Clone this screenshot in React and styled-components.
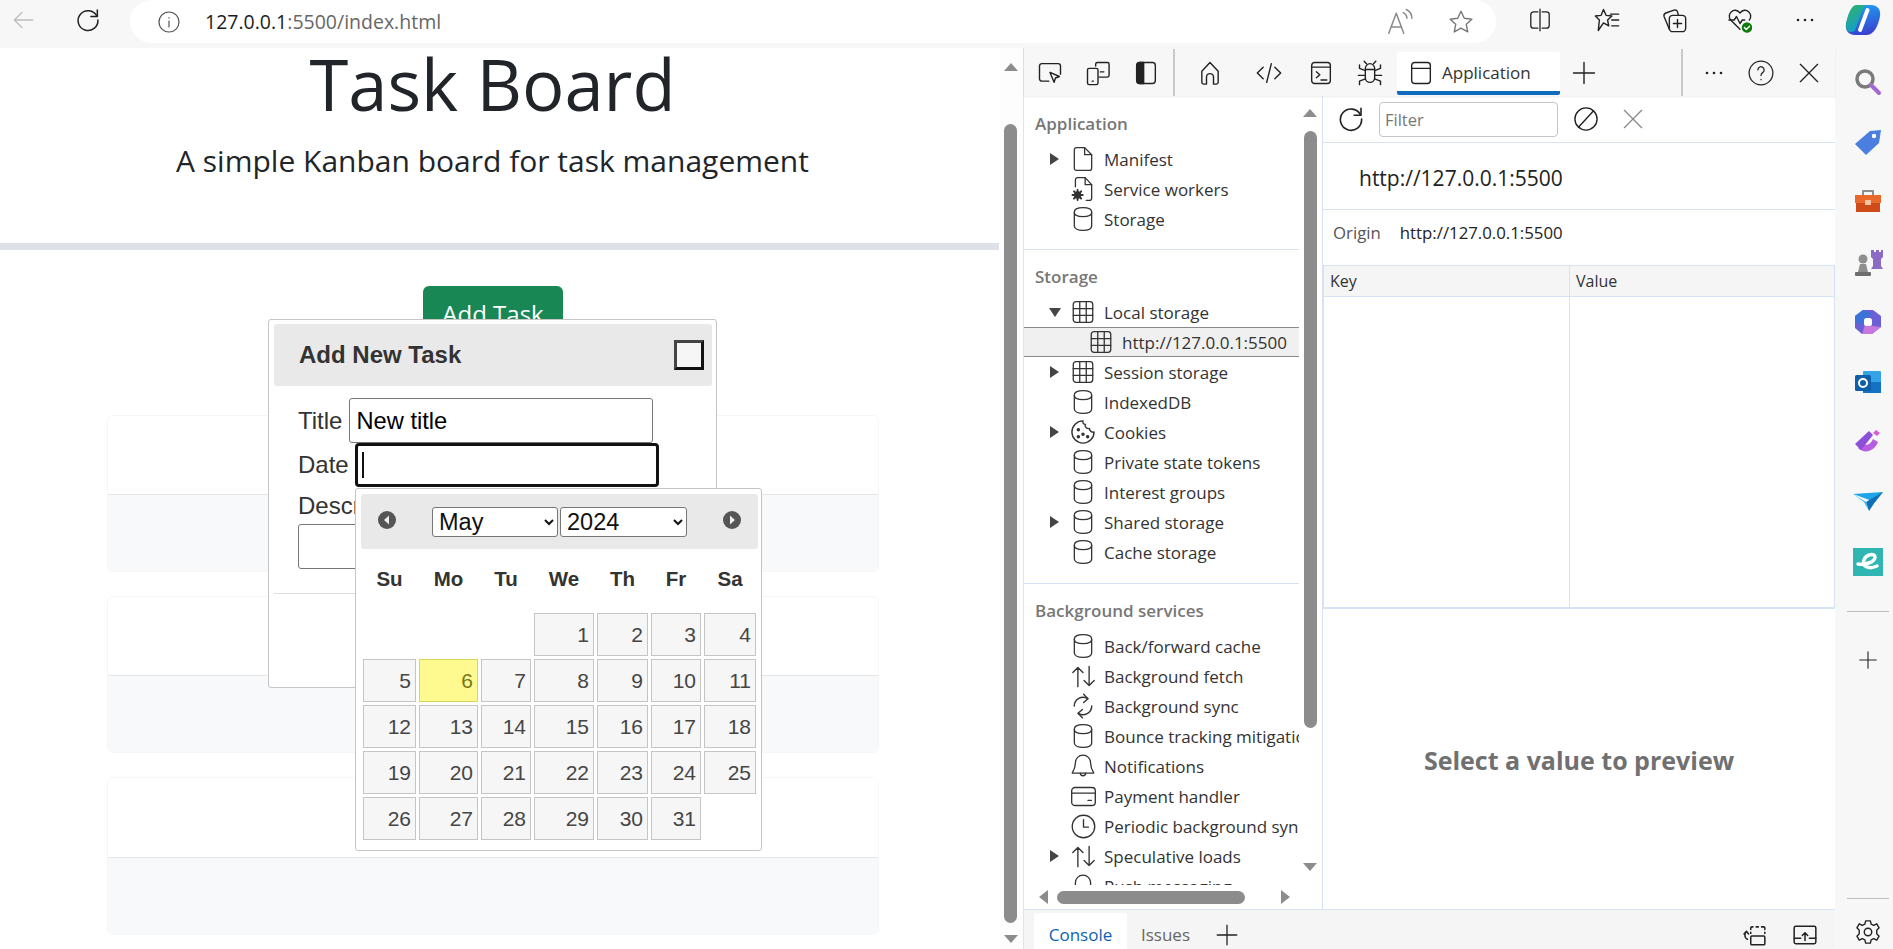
import styled, { createGlobalStyle } from "styled-components";

const GlobalStyle = createGlobalStyle`
  html, body { margin: 0; padding: 0; overflow: hidden; background: #fff; }
  * { box-sizing: border-box; }
`;

const UI_FONT = `"Open Sans", "Noto Sans", sans-serif`;
const ARIAL = `"Liberation Sans", Arial, sans-serif`;
const LINE = "#d6e3f5";

// ---- icons ----
const Svg = styled.svg`
  display: block;
  flex: none;
  fill: none;
  stroke: ${(p) => p.$color || "#333"};
  stroke-width: ${(p) => p.$sw || 1.2};
  stroke-linecap: round;
  stroke-linejoin: round;
`;
const Ico = ({ size = 24, color, sw, children }) => (
  <Svg width={size} height={size} viewBox="0 0 24 24" $color={color} $sw={sw}>
    {children}
  </Svg>
);

const Cylinder = () => (
  <Ico size={26}>
    <path d="M4 5.5C4 3 7.500 1.500 12 1.500S20 3 20 5.500v13c0 2.500-3.500 4-8 4s-8-1.500-8-4z" />
    <path d="M4 6c0 2.500 3.500 3.800 8 3.800S20 8.500 20 6" />
  </Ico>
);
const GridIcon = () => (
  <Ico size={26}>
    <rect x="3" y="2.500" width="18" height="19" rx="2.5" />
    <path d="M3 8.800h18M3 15.200h18M9 2.500v19M15 2.500v19" />
  </Ico>
);
const FileIcon = () => (
  <Ico size={26}>
    <path d="M6 1.500h7.500L20 8v12.500a2 2 0 0 1-2 2H6a2 2 0 0 1-2-2v-17a2 2 0 0 1 2-2z" />
    <path d="M13.500 1.500V8H20" />
  </Ico>
);
const WorkerIcon = () => (
  <Ico size={26}>
    <path d="M5 10V3.500a2 2 0 0 1 2-2h7L20 8v12.500a2 2 0 0 1-2 2h-3" />
    <path d="M14 1.500V8h6" />
    <circle cx="7" cy="17.500" r="2.600" fill="#333" strokeWidth="1.5" />
    <path d="M7 12.800v1.700M7 20.500v1.700M2.300 17.500H4M10 17.500h1.700M3.700 14.200l1.200 1.200M9.100 19.600l1.200 1.200M3.700 20.800l1.200-1.200M9.100 15.400l1.200-1.200" strokeWidth="1.8" />
  </Ico>
);
const CookieIcon = () => (
  <Ico size={28}>
    <path d="M12 2.500a9.500 9.500 0 1 0 9.500 9.500c-2 .5-4-1-4-3-2 .5-4.500-1.500-3.500-3.500-1.500 0-2.500-1.500-2-3z" />
    <circle cx="8" cy="10" r=".9" fill="#333" />
    <circle cx="12" cy="14" r=".9" fill="#333" />
    <circle cx="8" cy="16" r=".9" fill="#333" />
    <circle cx="16" cy="16" r=".9" fill="#333" />
  </Ico>
);
const UpDownIcon = () => (
  <Ico size={27}>
    <path d="M7 21V4M2.500 8.500 7 4l4.500 4.500M17 3v17M12.500 15.500 17 20l4.500-4.500" />
  </Ico>
);
const SyncIcon = () => (
  <Ico size={28}>
    <path d="M4.500 12a7.500 7.500 0 0 1 11.500-6.300M19.500 12A7.500 7.500 0 0 1 8 18.300" />
    <path d="M12.500 2l3.800 3.800-3.800 3.200M11.500 22l-3.800-3.800 3.800-3.200" />
  </Ico>
);
const BellIcon = () => (
  <Ico size={26}>
    <path d="M12 2a7 7 0 0 0-7 7c0 5-2 8-3 9.500h20c-1-1.500-3-4.500-3-9.500a7 7 0 0 0-7-7z" />
    <path d="M9.500 18.500a2.500 2.500 0 0 0 5 0" />
  </Ico>
);
const CardIcon = () => (
  <Ico size={27}>
    <rect x="1.5" y="4" width="21" height="16" rx="3" />
    <path d="M1.500 9h21M16 15.500h3" />
  </Ico>
);
const ClockIcon = () => (
  <Ico size={27}>
    <circle cx="12" cy="12" r="10" />
    <path d="M12 6v6.500h4.500" />
  </Ico>
);
const BackIcon = () => (
  <Ico size={26} color="#bdbdbd">
    <path d="M21 12H4M11 5l-7 7 7 7" />
  </Ico>
);
const ReloadIcon = ({ color = "#222", size = 28 }) => (
  <Ico size={size} color={color} sw={1.3}>
    <path d="M19.500 8.500A8.500 8.500 0 1 0 20.500 12" />
    <path d="M20 3.500v5.500h-5.500" />
  </Ico>
);
const InfoIcon = () => (
  <Ico size={24} color="#555">
    <circle cx="12" cy="12" r="10" />
    <path d="M12 11v6M12 7.500v.4" />
  </Ico>
);
const ReadAloudIcon = () => (
  <Ico size={30} color="#8a8a8a">
    <path d="M3 21 9 5l6 16M5 16h8" />
    <path d="M14.500 4.500c2 1 3 2.500 3 4.500M17 2c3 1.500 4.500 3.500 4.500 7" />
  </Ico>
);
const StarPath = "M12 2.800l2.800 6 6.500.8-4.800 4.400 1.300 6.500L12 17.200l-5.800 3.300 1.300-6.500L2.700 9.600l6.500-.8z";
const StarIcon = () => (
  <Ico size={28} color="#777">
    <path d={StarPath} />
  </Ico>
);
const SplitIcon = () => (
  <Ico size={26} color="#222">
    <path d="M10 4.500H6A2.500 2.500 0 0 0 3.500 7v10A2.500 2.500 0 0 0 6 19.500h4M14 4.500h4A2.500 2.500 0 0 1 20.500 7v10a2.500 2.500 0 0 1-2.500 2.500h-4M12 2v20" />
  </Ico>
);
const FavIcon = () => (
  <Ico size={28} color="#222">
    <path d="M9 3l2.200 5 5 .6-3.700 3.400 1 5L9 14.500 4.500 21 5.500 12 2 8.600l5-.6z" />
    <path d="M15 7h7M16 12h6M16 17h6" />
  </Ico>
);
const CollectionsIcon = () => (
  <Ico size={28} color="#222">
    <rect x="8" y="8" width="14" height="14" rx="3" />
    <path d="M15 11.500v7M11.500 15h7M8 20 3.500 9a2.500 2.500 0 0 1 1.500-3l7-2.500a2.500 2.500 0 0 1 3 1.500l.8 3" />
  </Ico>
);
const HealthIcon = () => (
  <Ico size={28} color="#222">
    <path d="M12 20 4 12c-4-5 3-12 8-6 5-6 12 1 8 6" />
    <path d="M2.500 12H7l2-3 3 6 2-3h2" />
    <circle cx="18" cy="18.5" r="5" fill="#107c10" stroke="#fff" strokeWidth="1" />
    <path d="M15.800 18.500l1.600 1.600 2.800-2.800" stroke="#fff" />
  </Ico>
);
const DotsIcon = ({ color = "#222" }) => (
  <Ico size={24} color={color}>
    <circle cx="5" cy="12" r="1.3" fill={color} stroke="none" />
    <circle cx="12" cy="12" r="1.3" fill={color} stroke="none" />
    <circle cx="19" cy="12" r="1.3" fill={color} stroke="none" />
  </Ico>
);
const InspectIcon = () => (
  <Ico size={28} color="#222">
    <path d="M11 19H5a2 2 0 0 1-2-2V6a2 2 0 0 1 2-2h14a2 2 0 0 1 2 2v7" />
    <path d="M12 11.500l8 3.500-3.300 1.300L15.500 20z" />
  </Ico>
);
const DeviceIcon = () => (
  <Ico size={28} color="#222">
    <path d="M10 6V4.500A1.500 1.500 0 0 1 11.500 3H20a1.500 1.500 0 0 1 1.500 1.500V14a1.500 1.500 0 0 1-1.500 1.500h-7" />
    <path d="M14 11h3" />
    <rect x="3" y="8" width="9" height="14" rx="1.5" />
    <path d="M7 19h1" />
  </Ico>
);
const PanelIcon = () => (
  <Ico size={28} color="#222">
    <rect x="4" y="3" width="16" height="18" rx="2.5" />
    <path d="M4 5.500A2.500 2.500 0 0 1 6.500 3H10v18H6.500A2.500 2.500 0 0 1 4 18.500z" fill="#222" />
  </Ico>
);
const HomeIcon = () => (
  <Ico size={28} color="#222">
    <path d="M5 10.500 12 3l7 7.500V20a1.500 1.500 0 0 1-1.500 1.500H15v-6a3 3 0 0 0-6 0v6H6.500A1.500 1.500 0 0 1 5 20z" />
  </Ico>
);
const CodeIcon = () => (
  <Ico size={28} color="#222">
    <path d="M7 7l-5 5 5 5M17 7l5 5-5 5M14 4l-4 16" />
  </Ico>
);
const ConsoleIcon = () => (
  <Ico size={28} color="#222">
    <rect x="4" y="3" width="16" height="18" rx="2.5" />
    <path d="M4 7h16M8 11l3 2.500-3 2.500M12 18h5" />
  </Ico>
);
const BugIcon = () => (
  <Ico size={28} color="#222">
    <path d="M8 8c0-2 2-4 4-4s4 2 4 4v8a4 4 0 0 1-8 0z M8 9h8" />
    <path d="M9 4 7 2M15 4l2-2M8 10 3 8V5M16 10l5-2V5M8 14H2M16 14h6M8 17l-5 2v3M16 17l5 2v3" />
  </Ico>
);
const WindowIcon = () => (
  <Ico size={28} color="#222">
    <rect x="4" y="3" width="16" height="18" rx="2.5" />
    <path d="M4 8h16" />
  </Ico>
);
const PlusIcon = ({ size = 28, color = "#222" }) => (
  <Ico size={size} color={color}>
    <path d="M12 3v18M3 12h18" />
  </Ico>
);
const HelpIcon = () => (
  <Ico size={30} color="#222" sw={1}>
    <circle cx="12" cy="12" r="9.5" />
    <path d="M9.500 9.500a2.500 2.500 0 1 1 4 2c-1 .7-1.500 1.300-1.500 2.500M12 17v.3" />
  </Ico>
);
const CloseIcon = ({ color = "#222", size = 26 }) => (
  <Ico size={size} color={color}>
    <path d="M4 4l16 16M20 4 4 20" />
  </Ico>
);
const BlockIcon = () => (
  <Ico size={28} color="#222">
    <circle cx="12" cy="12" r="9.5" />
    <path d="M5.500 19 18.500 5" />
  </Ico>
);
const DockIcon = () => (
  <Ico size={26} color="#222" sw={1.4}>
    <rect x="9" y="13" width="13" height="8" rx="1" />
    <path d="M9 7V5.500A1 1 0 0 1 10 4.500h1M14 4.500h2M19 4.500h2a1 1 0 0 1 1 1V7M22 9.500v1M9 9.500v1" />
    <path d="M5 9c-2 1-2 6 1 7M2.800 11 5 8.500 7 11" />
  </Ico>
);
const PopupIcon = () => (
  <Ico size={26} color="#222" sw={1.4}>
    <rect x="2" y="4" width="20" height="16" rx="1.5" />
    <path d="M2 15h6M16 15h6M12 17v-7M9.500 12.500 12 10l2.500 2.500" />
  </Ico>
);
const GearIcon = () => (
  <Ico size={28} color="#222">
    <circle cx="12" cy="12" r="3.2" />
    <path d="M10 2.500h4l.7 2.800 2.200 1 2.600-1.300 2 3.400-2 2v3.200l2 2-2 3.400-2.600-1.300-2.200 1-.7 2.800h-4l-.7-2.800-2.200-1-2.600 1.300-2-3.400 2-2v-3.200l-2-2 2-3.400 2.600 1.300 2.200-1z" />
  </Ico>
);
const PickerNav = ({ dir }) => (
  <Svg width="20" height="20" viewBox="0 0 20 20" $sw={0}>
    <circle cx="10" cy="10" r="9" fill="#555" stroke="none" />
    <path d={dir === "prev" ? "M12 5.500v9L7 10z" : "M8 5.500v9l5-4.500z"} fill="#eee" stroke="none" />
  </Svg>
);

// side rail logos
const CopilotLogo = () => (
  <Svg width="36" height="32" viewBox="0 0 36 32" $sw={0}>
    <defs>
      <linearGradient id="copilotLeft" x1="0" y1="0" x2="0.6" y2="1">
        <stop offset="0" stopColor="#33b65c" />
        <stop offset="1" stopColor="#0f9bd7" />
      </linearGradient>
      <linearGradient id="copilotRight" x1="0.4" y1="0" x2="0.6" y2="1">
        <stop offset="0" stopColor="#1f9cf0" />
        <stop offset="1" stopColor="#3a3fd0" />
      </linearGradient>
    </defs>
    <path d="M12 1h14c6 0 10 4 9 11-1.500 9-6 19-13 19H10C4 31 0 27 1 20 3 11 6 1 12 1z" fill="url(#copilotRight)" stroke="none" />
    <path d="M12 1h10c-3 1-4 3-5 6l-6 17c-1 3-3 4-5 4C1.500 28 .3 24 1 20 3 11 6 1 12 1z" fill="url(#copilotLeft)" stroke="none" />
    <path d="M22.500 6 15 26" stroke="#fff" strokeWidth="4" />
  </Svg>
);
const SearchLogo = () => (
  <Svg width="30" height="30" viewBox="0 0 30 30" $sw={0}>
    <circle cx="12" cy="12" r="8" stroke="#7a7a7a" strokeWidth="3.5" fill="none" />
    <path d="M18 18l8 8" stroke="#a26ad0" strokeWidth="4" />
  </Svg>
);
const TagLogo = () => (
  <Svg width="30" height="30" viewBox="0 0 30 30" $sw={0}>
    <path d="M2 17 17 4l11-1-2 13-13 12z" fill="#4a7fe0" stroke="none" />
    <circle cx="21" cy="9" r="2.2" fill="#fff" stroke="none" />
  </Svg>
);
const ToolboxLogo = () => (
  <Svg width="30" height="30" viewBox="0 0 30 30" $sw={0}>
    <path d="M10 8V4h10v4" stroke="#8d8d8d" strokeWidth="2" fill="none" />
    <rect x="2" y="8" width="26" height="8" fill="#ea6a2c" stroke="none" />
    <rect x="3" y="16" width="24" height="9" fill="#cf4a19" stroke="none" />
    <rect x="12" y="13" width="6" height="5" fill="#f3c2a5" stroke="none" />
  </Svg>
);
const ChessLogo = () => (
  <Svg width="32" height="32" viewBox="0 0 32 32" $sw={0}>
    <path d="M19 4h3v2h2V4h3v2h2V4h2v7l-2 2v7l2 3H19l2-3v-7l-2-2z" fill="#8a6cc4" stroke="none" />
    <circle cx="11" cy="13" r="4.5" fill="#8f8f8f" stroke="none" />
    <path d="M8 18h6l2 8H6z" fill="#8f8f8f" stroke="none" />
    <rect x="3" y="26" width="16" height="4" rx="1" fill="#6e6e6e" stroke="none" />
  </Svg>
);
const M365Logo = () => (
  <Svg width="30" height="30" viewBox="0 0 30 30" $sw={0}>
    <path d="M10 3h10l8 6v11l-9 7H9l-7-6V9z" fill="#6c5fd5" stroke="none" />
    <path d="M2 9l8-6 10 4-8 5v6l-10-3z" fill="#3b73d9" stroke="none" />
    <path d="M12 18l16 2-9 7H9z" fill="#c678de" stroke="none" />
    <rect x="11" y="11" width="8" height="8" rx="2.5" fill="#fff" stroke="none" />
  </Svg>
);
const OutlookLogo = () => (
  <Svg width="30" height="30" viewBox="0 0 30 30" $sw={0}>
    <rect x="10" y="4" width="18" height="22" rx="1" fill="#35a3e8" stroke="none" />
    <path d="M10 15h18v11H10z" fill="#1273c4" stroke="none" />
    <rect x="2" y="8" width="16" height="16" rx="1.5" fill="#0f5fa8" stroke="none" />
    <circle cx="10" cy="16" r="4" fill="none" stroke="#fff" strokeWidth="2" />
  </Svg>
);
const PaintLogo = () => (
  <Svg width="32" height="32" viewBox="0 0 32 32" $sw={0}>
    <path d="M6 22c6 6 16 4 20-6l-5-3c-2 5-6 7-10 5z" fill="#b85ce0" stroke="none" />
    <path d="M3 18 17 5l4 4L9 24z" fill="#8b4fd8" stroke="none" />
    <path d="M24 4l4 3-3 3-4-3z" fill="#d65cd8" stroke="none" />
  </Svg>
);
const SendLogo = () => (
  <Svg width="32" height="32" viewBox="0 0 32 32" $sw={0}>
    <path d="M1 8l30-2-8 10z" fill="#1ca6e8" stroke="none" />
    <path d="M31 6 14 16l3 9 6-9z" fill="#0f6fb8" stroke="none" />
    <path d="M1 8l13 8 3 9-5-9z" fill="#27c0ee" stroke="none" />
  </Svg>
);
const ELogo = () => (
  <Svg width="30" height="30" viewBox="0 0 30 30" $sw={0}>
    <rect x="0" y="1" width="30" height="28" fill="#2fb5b2" stroke="none" />
    <path d="M5 17c8 1 17-2 17-7 0-4-9-3-11 3s4 10 13 6" fill="none" stroke="#fff" strokeWidth="3.5" />
  </Svg>
);

// ---- browser chrome ----
const Shell = styled.div`
  width: 1893px;
  height: 949px;
  display: flex;
  flex-direction: column;
  overflow: hidden;
  background: #f7f7f7;
  font-family: ${UI_FONT};
  color: #333;
`;
const TopBar = styled.header`
  height: 48px;
  flex: none;
  display: flex;
  align-items: flex-start;
`;
const TopSlot = styled.div`
  width: ${(p) => p.$w}px;
  height: 40px;
  flex: none;
  display: flex;
  align-items: center;
  justify-content: center;
`;
const AddressPill = styled.div`
  width: 1366px;
  height: 43px;
  flex: none;
  background: #fff;
  border-radius: 22px;
  display: flex;
  align-items: center;
  padding-left: 27px;
`;
const UrlText = styled.div`
  margin-left: 24px;
  font-size: 19.5px;
  color: #666;
  flex: 1;
  b {
    font-weight: 400;
    color: #1c1c1c;
  }
`;
const PillEnd = styled.div`
  width: ${(p) => p.$w}px;
  flex: none;
  display: flex;
  justify-content: center;
`;
const Main = styled.div`
  flex: 1;
  display: flex;
  min-height: 0;
`;

// ---- the page ----
const Viewport = styled.div`
  width: 1023px;
  flex: none;
  display: flex;
  background: #fff;
`;
const Page = styled.main`
  width: 1000px;
  flex: none;
  position: relative;
  font-family: ${UI_FONT};
`;
const Hero = styled.section`
  height: 202px;
  padding-right: 14px;
  border-bottom: 7px solid #dfe1e8;
  margin-right: 1px;
  text-align: center;
`;
const HeroTitle = styled.h1`
  margin: 0;
  font-size: 70.5px;
  line-height: 72px;
  font-weight: 400;
  color: #212529;
`;
const HeroLead = styled.p`
  margin: 21px 0 0;
  font-size: 30px;
  line-height: 40px;
  font-weight: 400;
  color: #212529;
`;
const Board = styled.section`
  width: 986px;
  display: flex;
  flex-direction: column;
  align-items: center;
  padding-top: 36px;
`;
const AddButton = styled.button`
  width: 140px;
  height: 54px;
  border: 0;
  border-radius: 6px;
  background: #198754;
  color: #fff;
  font-family: ${UI_FONT};
  font-size: 24px;
`;
const Cards = styled.div`
  width: 772px;
  margin-top: 75px;
  display: flex;
  flex-direction: column;
  gap: 24px;
`;
const Card = styled.article`
  border-radius: 6px;
  overflow: hidden;
  border: 1px solid #f6f6f6;
`;
const CardTop = styled.div`
  height: ${(p) => p.$h}px;
  background: #fff;
  border-bottom: 1px solid #e6e6e6;
`;
const CardFoot = styled.div`
  height: 76px;
  background: #f8f9fa;
`;

// ---- jQuery UI dialog ----
const Dialog = styled.div`
  position: absolute;
  left: 268px;
  top: 271px;
  width: 449px;
  height: 369px;
  background: #fff;
  border: 1px solid #c5c5c5;
  border-radius: 3px;
  padding: 4px 4px 4px 5px;
  font-family: ${ARIAL};
  color: #333;
`;
const DialogBar = styled.div`
  height: 62px;
  background: #e9e9e9;
  border-radius: 3px;
  display: flex;
  align-items: center;
  justify-content: space-between;
  padding: 0 8px 0 25px;
`;
const DialogTitle = styled.span`
  font-size: 24px;
  font-weight: 700;
`;
const DialogClose = styled.div`
  width: 30px;
  height: 30px;
  background: #f6f6f6;
  border: 3px solid #111;
  border-left-color: #444;
  border-top-color: #444;
`;
const DialogBody = styled.div`
  padding: 12px 0 0 24px;
`;
const FormRow = styled.div`
  display: flex;
  align-items: center;
  gap: ${(p) => p.$gap}px;
  height: ${(p) => p.$h}px;
`;
const Label = styled.label`
  font-size: 24px;
`;
const TextInput = styled.input`
  width: 304px;
  height: 45px;
  flex: none;
  padding: 2px 6px 0;
  border: 1px solid #767676;
  border-radius: 3px;
  font-family: ${ARIAL};
  font-size: 23.7px;
  color: #000;
  background: #fff;
`;
const DateField = styled.div`
  width: 304px;
  height: 44px;
  flex: none;
  padding-left: 4px;
  border: 3px solid #111;
  border-radius: 4px;
  display: flex;
  align-items: center;
  background: #fff;
`;
const Caret = styled.span`
  width: 2px;
  height: 26px;
  background: #111;
`;
const DescLabel = styled.div`
  height: 37px;
  display: flex;
  align-items: center;
  font-size: 24px;
`;
const DescInput = styled.textarea`
  display: block;
  width: 304px;
  height: 45px;
  resize: none;
  border: 1px solid #767676;
  border-radius: 3px;
  background: #fff;
`;
const DialogRule = styled.hr`
  margin: 24px 0 0 -24px;
  border: 0;
  border-top: 1px solid #dcdcdc;
`;

// ---- datepicker ----
const Picker = styled.div`
  position: absolute;
  left: 355px;
  top: 440px;
  width: 407px;
  height: 363px;
  background: #fff;
  border: 1px solid #c5c5c5;
  border-radius: 3px;
  padding: 5px 3px 5px 5px;
  font-family: ${ARIAL};
`;
const PickerHead = styled.div`
  height: 55px;
  background: #e9e9e9;
  border-radius: 3px;
  display: flex;
  align-items: center;
  padding: 0 0 4px 16px;
`;
const PickerSelects = styled.div`
  display: flex;
  gap: 2px;
  margin: 5px 35px 0 35px;
`;
const PickerSelect = styled.select`
  width: ${(p) => p.$w}px;
  height: 30px;
  border: 1px solid #767676;
  border-radius: 3px;
  background-color: #fff;
  font-family: ${ARIAL};
  font-size: 23.5px;
  color: #111;
  padding: 0 0 0 2px;
`;
const DAY_COLS = "53px 59px 50px 60px 51px 50px 52px";
const WeekHead = styled.div`
  height: 60px;
  margin-left: 2px;
  display: grid;
  grid-template-columns: ${DAY_COLS};
  column-gap: 3px;
  align-items: center;
  text-align: center;
  font-size: 20.5px;
  font-weight: 700;
  color: #333;
`;
const DayGrid = styled.div`
  margin: 4px 0 0 2px;
  display: grid;
  grid-template-columns: ${DAY_COLS};
  grid-auto-rows: 43px;
  gap: 3px;
`;
const Day = styled.div`
  grid-column-start: ${(p) => p.$start || "auto"};
  border: 1px solid ${(p) => (p.$today ? "#dad55e" : "#c5c5c5")};
  background: ${(p) => (p.$today ? "#fffa90" : "#f6f6f6")};
  color: ${(p) => (p.$today ? "#777620" : "#454545")};
  font-size: 21px;
  text-align: right;
  line-height: 41px;
  padding-right: 4px;
`;

// ---- page scrollbar ----
const PageGutter = styled.div`
  width: 23px;
  flex: none;
  display: flex;
  flex-direction: column;
  align-items: center;
  padding: 15px 2px 4px 0;
  background: #fdfdfd;
`;
const Arrow = styled.span`
  width: 0;
  height: 0;
  flex: none;
  border-left: ${(p) => (p.$dir === "right" ? "9px solid #8c8c8c" : p.$dir === "left" ? "0" : "7px solid transparent")};
  border-right: ${(p) => (p.$dir === "left" ? "9px solid #8c8c8c" : p.$dir === "right" ? "0" : "7px solid transparent")};
  border-top: ${(p) =>
    p.$dir === "down" ? "8px solid #8c8c8c" : p.$dir === "up" ? "0" : "7px solid transparent"};
  border-bottom: ${(p) =>
    p.$dir === "up" ? "8px solid #8c8c8c" : p.$dir === "down" ? "0" : "7px solid transparent"};
`;
const VThumb = styled.div`
  width: 13px;
  height: ${(p) => p.$h}px;
  flex: none;
  margin: ${(p) => p.$mt}px 0 ${(p) => p.$mb}px;
  background: #8c8c8c;
  border-radius: 7px;
`;

// ---- devtools ----
const DevTools = styled.aside`
  width: 812px;
  flex: none;
  display: flex;
  flex-direction: column;
  background: #fff;
  border-left: 1px solid #e3e3e3;
`;
const TabBar = styled.div`
  height: 48px;
  flex: none;
  display: flex;
  background: #f7f7f7;
  padding: 2px 0 0 2px;
  box-shadow: 0 1px 2px rgba(0, 0, 0, 0.08);
  position: relative;
`;
const ToolSlot = styled.div`
  width: ${(p) => p.$w}px;
  flex: none;
  display: flex;
  align-items: center;
  justify-content: center;
`;
const ToolRule = styled.div`
  width: 2px;
  height: 47px;
  flex: none;
  margin: -1px ${(p) => p.$mr}px 0 ${(p) => p.$ml}px;
  background: #c9c9c9;
`;
const ActiveTab = styled.div`
  width: 163px;
  height: 43px;
  flex: none;
  margin-top: 2px;
  padding: 2px 0 0 10px;
  display: flex;
  align-items: center;
  gap: 7px;
  background: #fff;
  border-bottom: 4px solid #0f6cbd;
  border-radius: 2px;
  font-size: 17px;
  color: #333;
`;
const Split = styled.div`
  flex: 1;
  min-height: 0;
  display: flex;
`;
const Sidebar = styled.nav`
  width: 299px;
  flex: none;
  display: flex;
  flex-direction: column;
  border-right: 1px solid ${LINE};
`;
const SideMain = styled.div`
  flex: 1;
  min-height: 0;
  display: flex;
`;
const Tree = styled.div`
  width: 275px;
  flex: none;
  overflow: hidden;
  padding-top: 12px;
`;
const TreeHeading = styled.div`
  height: 30px;
  display: flex;
  align-items: center;
  padding-left: 11px;
  margin-bottom: 6px;
  font-size: 17px;
  font-weight: 600;
  color: #777;
`;
const TreeRow = styled.div`
  height: 30px;
  display: flex;
  align-items: center;
  white-space: nowrap;
  padding-left: ${(p) => 26 + (p.$indent || 0)}px;
  font-size: 17px;
  color: #333;
  ${(p) => p.$selected && "background: #f0f0f0; border-top: 1px solid #8a8a8a; border-bottom: 1px solid #8a8a8a;"}
`;
const TreeCaret = styled.div`
  width: 12px;
  flex: none;
  display: flex;
  justify-content: flex-start;
`;
const CaretRight = styled.span`
  border-left: 9px solid #444;
  border-top: 6px solid transparent;
  border-bottom: 6px solid transparent;
`;
const CaretDown = styled.span`
  margin-left: -1px;
  border-top: 9px solid #444;
  border-left: 6px solid transparent;
  border-right: 6px solid transparent;
`;
const TreeIcon = styled.div`
  width: 42px;
  flex: none;
  display: flex;
  justify-content: center;
`;
const TreeRule = styled.div`
  height: 1px;
  margin: ${(p) => p.$mt}px 0 11px;
  background: ${LINE};
`;
const SideGutter = styled.div`
  width: 24px;
  flex: none;
  display: flex;
  flex-direction: column;
  align-items: center;
  padding: 13px 2px 0 0;
`;
const HBar = styled.div`
  height: 24px;
  flex: none;
  display: flex;
  align-items: center;
  padding: 0 10px 0 15px;
  gap: 9px;
`;
const HThumb = styled.div`
  width: 188px;
  height: 13px;
  margin-right: 27px;
  background: #8c8c8c;
  border-radius: 7px;
`;
const Detail = styled.section`
  flex: 1;
  min-width: 0;
  display: flex;
  flex-direction: column;
`;
const DetailBar = styled.div`
  height: 47px;
  flex: none;
  display: flex;
  align-items: center;
  border-bottom: 1px solid ${LINE};
  padding-left: 13px;
`;
const Filter = styled.div`
  width: 179px;
  height: 35px;
  margin: 0 0 0 13px;
  padding-left: 5px;
  border: 1px solid #c4c4c4;
  border-radius: 4px;
  display: flex;
  align-items: center;
  font-size: 16.5px;
  color: #777;
`;
const OriginTitle = styled.div`
  height: 67px;
  flex: none;
  display: flex;
  align-items: center;
  padding: 4px 0 0 36px;
  border-bottom: 1px solid ${LINE};
  font-size: 21px;
  color: #222;
`;
const OriginRow = styled.div`
  height: 55px;
  flex: none;
  display: flex;
  align-items: center;
  gap: 19px;
  padding: 0 0 10px 10px;
  font-size: 16.8px;
  color: #222;
  span {
    color: #555;
  }
`;
const KvTable = styled.div`
  height: 344px;
  flex: none;
  display: flex;
  flex-direction: column;
  border: 1px solid ${LINE};
  border-bottom-width: 2px;
`;
const KvHead = styled.div`
  height: 31px;
  flex: none;
  display: grid;
  grid-template-columns: 245px 1fr;
  background: #f5f5f5;
  border-bottom: 1px solid ${LINE};
  font-size: 16px;
  color: #333;
  > div {
    display: flex;
    align-items: center;
    padding-left: 6px;
  }
  > div + div {
    border-left: 1px solid ${LINE};
  }
`;
const KvBody = styled.div`
  flex: 1;
  display: grid;
  grid-template-columns: 245px 1fr;
  > div + div {
    border-left: 1px solid ${LINE};
  }
`;
const Preview = styled.div`
  flex: 1;
  display: flex;
  align-items: center;
  justify-content: center;
  padding-top: 2px;
  font-size: 25px;
  font-weight: 700;
  color: #707070;
`;
const Drawer = styled.div`
  height: 40px;
  flex: none;
  display: flex;
  background: #f5f5f5;
  border-top: 1px solid ${LINE};
  padding: 3px 0 0 10px;
  font-size: 17px;
`;
const DrawerTab = styled.div`
  width: ${(p) => p.$w}px;
  flex: none;
  display: flex;
  align-items: center;
  justify-content: center;
  padding-top: 7px;
  background: ${(p) => (p.$active ? "#fff" : "transparent")};
  color: ${(p) => (p.$active ? "#0f5fb0" : "#666")};
  border-radius: 3px 3px 0 0;
`;
const DrawerAdd = styled.div`
  width: 46px;
  flex: none;
  display: flex;
  align-items: center;
  justify-content: center;
  padding-top: 7px;
`;
const DrawerRight = styled.div`
  margin-left: auto;
  display: flex;
  align-items: center;
  gap: 25px;
  padding: 7px 17px 0 0;
`;

// ---- side rail ----
const Rail = styled.aside`
  width: 58px;
  flex: none;
  display: flex;
  flex-direction: column;
  align-items: center;
  background: #f7f7f7;
  padding: 4px 0 0 8px;
`;
const RailItem = styled.div`
  height: 60px;
  width: 100%;
  flex: none;
  display: flex;
  align-items: center;
  justify-content: center;
  margin-top: ${(p) => p.$mt || 0}px;
`;
const RailRule = styled.div`
  width: 42px;
  height: 1px;
  flex: none;
  margin-top: ${(p) => p.$mt || 0}px;
  background: #bdbdbd;
`;

const SECTIONS = [
  {
    title: "Application",
    rows: [
      { label: "Manifest", icon: <FileIcon />, caret: "right" },
      { label: "Service workers", icon: <WorkerIcon /> },
      { label: "Storage", icon: <Cylinder /> },
    ],
  },
  {
    title: "Storage",
    ruleTop: 15,
    rows: [
      { label: "Local storage", icon: <GridIcon />, caret: "down" },
      { label: "http://127.0.0.1:5500", icon: <GridIcon />, indent: 18, selected: true },
      { label: "Session storage", icon: <GridIcon />, caret: "right" },
      { label: "IndexedDB", icon: <Cylinder /> },
      { label: "Cookies", icon: <CookieIcon />, caret: "right" },
      { label: "Private state tokens", icon: <Cylinder /> },
      { label: "Interest groups", icon: <Cylinder /> },
      { label: "Shared storage", icon: <Cylinder />, caret: "right" },
      { label: "Cache storage", icon: <Cylinder /> },
    ],
  },
  {
    title: "Background services",
    ruleTop: 16,
    rows: [
      { label: "Back/forward cache", icon: <Cylinder /> },
      { label: "Background fetch", icon: <UpDownIcon /> },
      { label: "Background sync", icon: <SyncIcon /> },
      { label: "Bounce tracking mitigations", icon: <Cylinder /> },
      { label: "Notifications", icon: <BellIcon /> },
      { label: "Payment handler", icon: <CardIcon /> },
      { label: "Periodic background sync", icon: <ClockIcon /> },
      { label: "Speculative loads", icon: <UpDownIcon />, caret: "right" },
      { label: "Push messaging", icon: <BellIcon /> },
    ],
  },
];

const WEEK = ["Su", "Mo", "Tu", "We", "Th", "Fr", "Sa"];
const DAYS = Array.from({ length: 31 }, (_, i) => i + 1);
const MONTHS = ["Jan", "Feb", "Mar", "Apr", "May", "Jun", "Jul", "Aug", "Sep", "Oct", "Nov", "Dec"];
const RAIL = [SearchLogo, TagLogo, ToolboxLogo, ChessLogo, M365Logo, OutlookLogo, PaintLogo, SendLogo, ELogo];
const CARD_TOPS = [79, 79, 80];

const App = () => (
  <>
    <GlobalStyle />
    <Shell>
      <TopBar>
        <TopSlot $w={46}>
          <BackIcon />
        </TopSlot>
        <TopSlot $w={84}>
          <ReloadIcon />
        </TopSlot>
        <AddressPill>
          <InfoIcon />
          <UrlText>
            <b>127.0.0.1</b>:5500/index.html
          </UrlText>
          <PillEnd $w={62}>
            <ReadAloudIcon />
          </PillEnd>
          <PillEnd $w={60}>
            <StarIcon />
          </PillEnd>
          <PillEnd $w={5} />
        </AddressPill>
        <TopSlot $w={88}>
          <SplitIcon />
        </TopSlot>
        <TopSlot $w={46}>
          <FavIcon />
        </TopSlot>
        <TopSlot $w={88}>
          <CollectionsIcon />
        </TopSlot>
        <TopSlot $w={44}>
          <HealthIcon />
        </TopSlot>
        <TopSlot $w={86}>
          <DotsIcon />
        </TopSlot>
        <TopSlot $w={30}>
          <CopilotLogo />
        </TopSlot>
      </TopBar>
      <Main>
        <Viewport>
          <Page>
            <Hero>
              <HeroTitle>Task Board</HeroTitle>
              <HeroLead>A simple Kanban board for task management</HeroLead>
            </Hero>
            <Board>
              <AddButton>Add Task</AddButton>
              <Cards>
                {CARD_TOPS.map((h, n) => (
                  <Card key={n}>
                    <CardTop $h={h} />
                    <CardFoot />
                  </Card>
                ))}
              </Cards>
            </Board>
            <Dialog>
              <DialogBar>
                <DialogTitle>Add New Task</DialogTitle>
                <DialogClose />
              </DialogBar>
              <DialogBody>
                <FormRow $gap={7} $h={45}>
                  <Label>Title</Label>
                  <TextInput defaultValue="New title" />
                </FormRow>
                <FormRow $gap={6} $h={44}>
                  <Label>Date</Label>
                  <DateField>
                    <Caret />
                  </DateField>
                </FormRow>
                <DescLabel>Description</DescLabel>
                <DescInput />
                <DialogRule />
              </DialogBody>
            </Dialog>
            <Picker>
              <PickerHead>
                <PickerNav dir="prev" />
                <PickerSelects>
                  <PickerSelect $w={126} defaultValue="May">
                    {MONTHS.map((m) => (
                      <option key={m}>{m}</option>
                    ))}
                  </PickerSelect>
                  <PickerSelect $w={127} defaultValue="2024">
                    <option>2023</option>
                    <option>2024</option>
                    <option>2025</option>
                  </PickerSelect>
                </PickerSelects>
                <PickerNav dir="next" />
              </PickerHead>
              <WeekHead>
                {WEEK.map((d) => (
                  <span key={d}>{d}</span>
                ))}
              </WeekHead>
              <DayGrid>
                {DAYS.map((d) => (
                  <Day key={d} $today={d === 6} $start={d === 1 ? 4 : undefined}>
                    {d}
                  </Day>
                ))}
              </DayGrid>
            </Picker>
          </Page>
          <PageGutter>
            <Arrow $dir="up" />
            <VThumb $h={799} $mt={53} $mb={12} />
            <Arrow $dir="down" />
          </PageGutter>
        </Viewport>
        <DevTools>
          <TabBar>
            <ToolSlot $w={48}>
              <InspectIcon />
            </ToolSlot>
            <ToolSlot $w={48}>
              <DeviceIcon />
            </ToolSlot>
            <ToolSlot $w={48}>
              <PanelIcon />
            </ToolSlot>
            <ToolRule $ml={3} $mr={6} />
            <ToolSlot $w={58}>
              <HomeIcon />
            </ToolSlot>
            <ToolSlot $w={60}>
              <CodeIcon />
            </ToolSlot>
            <ToolSlot $w={44}>
              <ConsoleIcon />
            </ToolSlot>
            <ToolSlot $w={54}>
              <BugIcon />
            </ToolSlot>
            <ActiveTab>
              <WindowIcon />
              Application
            </ActiveTab>
            <ToolSlot $w={48}>
              <PlusIcon />
            </ToolSlot>
            <ToolRule $ml={73} $mr={8} />
            <ToolSlot $w={46}>
              <DotsIcon />
            </ToolSlot>
            <ToolSlot $w={48}>
              <HelpIcon />
            </ToolSlot>
            <ToolSlot $w={48}>
              <CloseIcon />
            </ToolSlot>
          </TabBar>
          <Split>
            <Sidebar>
              <SideMain>
                <Tree>
                  {SECTIONS.map((section) => (
                    <div key={section.title}>
                      {section.ruleTop && <TreeRule $mt={section.ruleTop} />}
                      <TreeHeading>{section.title}</TreeHeading>
                      {section.rows.map((row) => (
                        <TreeRow key={row.label} $indent={row.indent} $selected={row.selected}>
                          <TreeCaret>
                            {row.caret === "right" && <CaretRight />}
                            {row.caret === "down" && <CaretDown />}
                          </TreeCaret>
                          <TreeIcon>{row.icon}</TreeIcon>
                          {row.label}
                        </TreeRow>
                      ))}
                    </div>
                  ))}
                </Tree>
                <SideGutter>
                  <Arrow $dir="up" />
                  <VThumb $h={597} $mt={14} $mb={135} />
                  <Arrow $dir="down" />
                </SideGutter>
              </SideMain>
              <HBar>
                <Arrow $dir="left" />
                <HThumb />
                <Arrow $dir="right" />
              </HBar>
            </Sidebar>
            <Detail>
              <DetailBar>
                <ReloadIcon size={30} />
                <Filter>Filter</Filter>
                <ToolSlot $w={55}>
                  <BlockIcon />
                </ToolSlot>
                <ToolSlot $w={40}>
                  <CloseIcon color="#8a8a8a" />
                </ToolSlot>
              </DetailBar>
              <OriginTitle>http://127.0.0.1:5500</OriginTitle>
              <OriginRow>
                <span>Origin</span>
                http://127.0.0.1:5500
              </OriginRow>
              <KvTable>
                <KvHead>
                  <div>Key</div>
                  <div>Value</div>
                </KvHead>
                <KvBody>
                  <div />
                  <div />
                </KvBody>
              </KvTable>
              <Preview>Select a value to preview</Preview>
            </Detail>
          </Split>
          <Drawer>
            <DrawerTab $w={93} $active>
              Console
            </DrawerTab>
            <DrawerTab $w={77}>Issues</DrawerTab>
            <DrawerAdd>
              <PlusIcon size={26} />
            </DrawerAdd>
            <DrawerRight>
              <DockIcon />
              <PopupIcon />
            </DrawerRight>
          </Drawer>
        </DevTools>
        <Rail>
          {RAIL.map((Logo, i) => (
            <RailItem key={i}>
              <Logo />
            </RailItem>
          ))}
          <RailRule $mt={19} />
          <RailItem $mt={18}>
            <PlusIcon size={22} />
          </RailItem>
          <RailRule $mt={208} />
          <RailItem $mt={3}>
            <GearIcon />
          </RailItem>
        </Rail>
      </Main>
    </Shell>
  </>
);

export default App;
